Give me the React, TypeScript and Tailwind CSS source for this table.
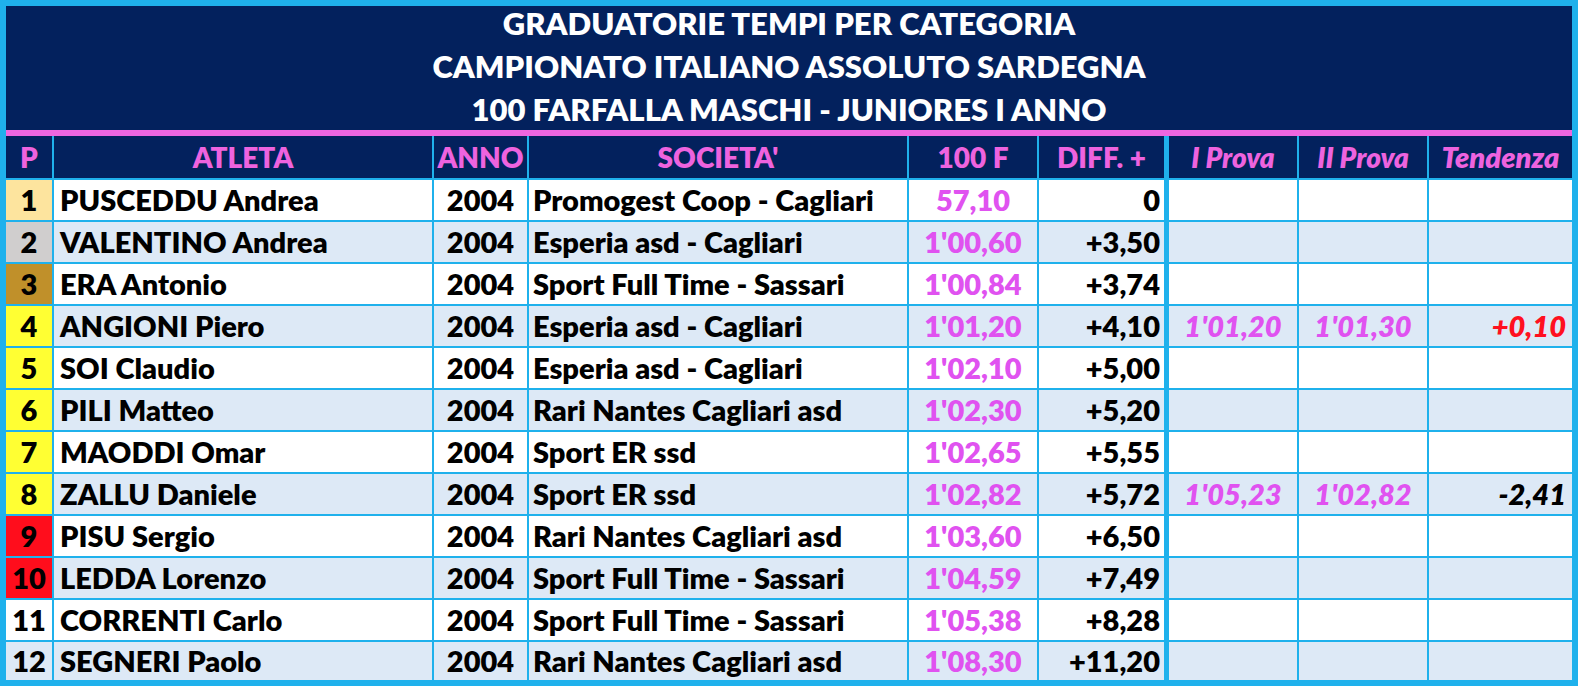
import React from "react";

type Row = {
  pos: number;
  name: string;
  year: string;
  club: string;
  time: string;
  diff: string;
  p1?: string;
  p2?: string;
  trend?: string;
  trendRed?: boolean;
};

const rows: Row[] = [
  { pos: 1, name: "PUSCEDDU Andrea", year: "2004", club: "Promogest Coop - Cagliari", time: "57,10", diff: "0" },
  { pos: 2, name: "VALENTINO Andrea", year: "2004", club: "Esperia asd - Cagliari", time: "1'00,60", diff: "+3,50" },
  { pos: 3, name: "ERA Antonio", year: "2004", club: "Sport Full Time - Sassari", time: "1'00,84", diff: "+3,74" },
  { pos: 4, name: "ANGIONI Piero", year: "2004", club: "Esperia asd - Cagliari", time: "1'01,20", diff: "+4,10", p1: "1'01,20", p2: "1'01,30", trend: "+0,10", trendRed: true },
  { pos: 5, name: "SOI Claudio", year: "2004", club: "Esperia asd - Cagliari", time: "1'02,10", diff: "+5,00" },
  { pos: 6, name: "PILI Matteo", year: "2004", club: "Rari Nantes Cagliari asd", time: "1'02,30", diff: "+5,20" },
  { pos: 7, name: "MAODDI Omar", year: "2004", club: "Sport ER ssd", time: "1'02,65", diff: "+5,55" },
  { pos: 8, name: "ZALLU Daniele", year: "2004", club: "Sport ER ssd", time: "1'02,82", diff: "+5,72", p1: "1'05,23", p2: "1'02,82", trend: "-2,41" },
  { pos: 9, name: "PISU Sergio", year: "2004", club: "Rari Nantes Cagliari asd", time: "1'03,60", diff: "+6,50" },
  { pos: 10, name: "LEDDA Lorenzo", year: "2004", club: "Sport Full Time - Sassari", time: "1'04,59", diff: "+7,49" },
  { pos: 11, name: "CORRENTI Carlo", year: "2004", club: "Sport Full Time - Sassari", time: "1'05,38", diff: "+8,28" },
  { pos: 12, name: "SEGNERI Paolo", year: "2004", club: "Rari Nantes Cagliari asd", time: "1'08,30", diff: "+11,20" },
];

// medal / zone colours for the position cell
const posBg = (pos: number, zebra: string) => {
  if (pos === 1) return "bg-[#fde49e]";
  if (pos === 2) return "bg-[#d0cece]";
  if (pos === 3) return "bg-[#c0902a]";
  if (pos <= 8) return "bg-[#ffff33]";
  if (pos <= 10) return "bg-[#ff0d1c]";
  return zebra;
};

// column widths include the cyan separator on the right of each cell
const cols = "grid grid-cols-[48px_380px_95px_380px_130px_130px_130px_130px_143px] grid-rows-[100%]";

export default function App() {
  return (
    <div
      className="w-[1578px] h-[686px] bg-[#1fb1ec] p-[6px] overflow-hidden"
      style={{ fontFamily: "Lato, 'Noto Sans', sans-serif" }}
    >
      {/* Title */}
      <div className="h-[124px] pb-[4px] bg-[#03215d] flex flex-col items-center justify-center text-white font-extrabold text-[31px] leading-[43px]">
        <div>GRADUATORIE TEMPI PER CATEGORIA</div>
        <div>CAMPIONATO ITALIANO ASSOLUTO SARDEGNA</div>
        <div>100 FARFALLA MASCHI - JUNIORES I ANNO</div>
      </div>
      <div className="h-[6px] bg-[#ee66e0]" />

      {/* Header */}
      <div className={`${cols} h-[42px] bg-[#03215d] text-[#ee63df] font-extrabold text-[28px] leading-[34px]`}>
        <div className="flex items-center justify-center border-r-2 border-[#1fb1ec]">P</div>
        <div className="flex items-center justify-center border-r-2 border-[#1fb1ec]">ATLETA</div>
        <div className="flex items-center justify-center border-r-2 border-[#1fb1ec]">ANNO</div>
        <div className="flex items-center justify-center border-r-2 border-[#1fb1ec]">SOCIETA'</div>
        <div className="flex items-center justify-center border-r-2 border-[#1fb1ec]">100 F</div>
        <div className="flex items-center justify-center border-r-[5px] border-[#1fb1ec]">DIFF. +</div>
        <div className="flex items-center justify-center italic border-r-2 border-[#1fb1ec]">I Prova</div>
        <div className="flex items-center justify-center italic border-r-2 border-[#1fb1ec]">II Prova</div>
        <div className="flex items-center justify-center italic text-[29px]">Tendenza</div>
      </div>

      {/* Rows */}
      {rows.map((r, i) => {
        const zebra = i % 2 === 0 ? "bg-white" : "bg-[#dde9f6]";
        const last = i === rows.length - 1;
        return (
          <div
            key={r.pos}
            className={`${cols} ${last ? "h-[40px]" : "h-[42px]"} border-t-2 border-[#1fb1ec] ${zebra} text-black font-extrabold text-[29px] leading-[34px]`}
          >
            <div className={`flex items-center justify-center border-r-2 border-[#1fb1ec] ${posBg(r.pos, zebra)}`}>{r.pos}</div>
            <div className="flex items-center pl-[6px] border-r-2 border-[#1fb1ec] whitespace-nowrap">{r.name}</div>
            <div className="flex items-center justify-center border-r-2 border-[#1fb1ec]">{r.year}</div>
            <div className="flex items-center pl-[4px] border-r-2 border-[#1fb1ec] whitespace-nowrap">{r.club}</div>
            <div className="flex items-center justify-center border-r-2 border-[#1fb1ec] text-[#e052f0]">{r.time}</div>
            <div className="flex items-center justify-end pr-[4px] border-r-[5px] border-[#1fb1ec]">{r.diff}</div>
            <div className="flex items-center justify-center border-r-2 border-[#1fb1ec] italic text-[#e052f0]">{r.p1}</div>
            <div className="flex items-center justify-center border-r-2 border-[#1fb1ec] italic text-[#e052f0]">{r.p2}</div>
            <div className={`flex items-center justify-end pr-[6px] italic ${r.trendRed ? "text-[#ff1020]" : "text-black"}`}>{r.trend}</div>
          </div>
        );
      })}
    </div>
  );
}
